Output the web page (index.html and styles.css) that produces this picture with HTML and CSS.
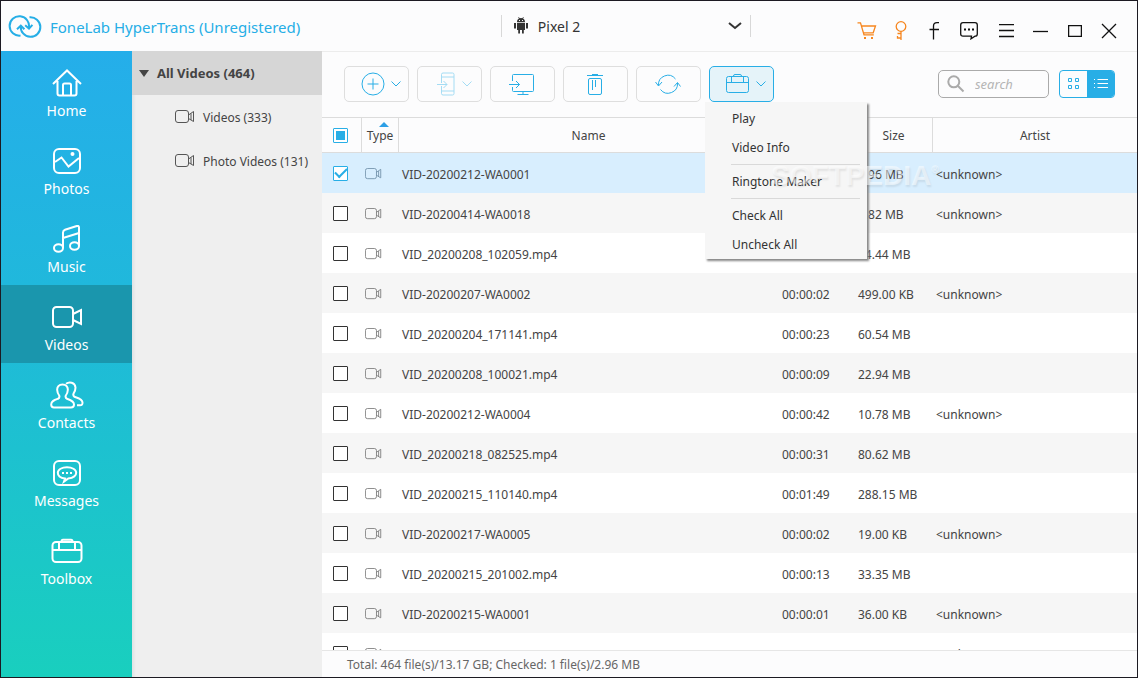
FILE: index.html
```
<!DOCTYPE html>
<html lang="en">
<head>
  <meta charset="UTF-8" />
  <meta name="viewport" content="width=device-width, initial-scale=1" />
  <title>FoneLab HyperTrans (Unregistered)</title>
  <link rel="stylesheet" href="styles.css">
</head>
<body>

  <!-- Shared icons -->
  <svg class="sprite" aria-hidden="true">
    <symbol id="icon-camera" viewBox="0 0 20 14">
      <rect x="0.5" y="0.5" width="13" height="12" rx="2.5" />
      <path d="M13.5 5L18.5 1.5V11.5L13.5 8.5M16 3.5V10" />
    </symbol>
    <symbol id="icon-chevron" viewBox="0 0 10 6">
      <path d="M0.5 0.5L5 5L9.5 0.5" />
    </symbol>
  </svg>

  <div class="window">
    <header class="titlebar">
      <div class="brand">
        <svg class="logo" width="34" height="24" viewBox="0 0 34 24">
          <path d="M12.5 20.6A9.7 9.7 0 1 1 20.8 13M17.2 10.2L21 13.6L24.4 9.8" />
          <path d="M21.5 2.3A9.8 9.8 0 1 1 12.8 11M9 14.2L12.8 10.6L16.4 14.2" />
        </svg>
        <h1>FoneLab HyperTrans (Unregistered)</h1>
      </div>

      <div class="device">
        <svg width="14" height="18" viewBox="0 0 14 18">
          <path fill="#333" d="M3 5C3 3.4 3.9 2.2 5 1.6L4.2 0.4L4.8 0.1L5.7 1.3Q7 0.9 8.3 1.3L9.2 0.1L9.8 0.4L9 1.6C10.1 2.2 11 3.4 11 5ZM3 5.7H11V13H9.8V16.5H8V13H6V16.5H4.2V13H3ZM0 6H2V11.5H0ZM12 6H14V11.5H12Z" />
          <path fill="#fff" d="M5 3H6V4H5ZM8 3H9V4H8Z" />
        </svg>
        <select aria-label="Device">
          <option selected>Pixel 2</option>
        </select>
        <svg class="device-arrow" width="14" height="8" viewBox="0 0 14 8"><path d="M1 1L7 6L13 1" /></svg>
      </div>

      <div class="actions">
        <button class="orange" aria-label="Buy">
          <svg width="20" height="18" viewBox="0 0 20 18"><path d="M0.5 0.8H3.5L7 12.8H16.8M4.7 4H18.5L16.2 10.8H6.4" /><path class="solid" d="M7 15H9V17H7ZM14 15H16V17H14Z" /></svg>
        </button>
        <button class="orange" aria-label="Register">
          <svg width="12" height="20" viewBox="0 0 12 20"><circle cx="6" cy="5.5" r="4.8" /><path d="M6 10.3V19M6 12.5H2.5M6 17H2.5V15" /></svg>
        </button>
        <button aria-label="Facebook">
          <svg width="12" height="18" viewBox="0 0 12 18"><path d="M4.5 17.5V4Q4.5 0.7 8 0.7H10M0.5 7.5H10" /></svg>
        </button>
        <button aria-label="Feedback">
          <svg width="18" height="18" viewBox="0 0 18 18"><path d="M11.5 14.2H3Q0.7 14.2 0.7 12V3Q0.7 0.7 3 0.7H15Q17.3 0.7 17.3 3V12Q17.3 14.2 15 14.2L11 16.8Z" /><path class="solid" d="M4 6.5H6V8.5H4ZM8 6.5H10V8.5H8ZM12 6.5H14V8.5H12Z" /></svg>
        </button>
        <button class="menu-button" aria-label="Menu">
          <svg width="16" height="14" viewBox="0 0 16 14"><path d="M0 0.5H15M0 6.5H15M0 12.5H15" /></svg>
        </button>
        <button aria-label="Minimize">
          <svg width="16" height="14" viewBox="0 0 16 14"><path d="M0 7.5H15" /></svg>
        </button>
        <button aria-label="Maximize">
          <svg width="14" height="12" viewBox="0 0 14 12"><path d="M0.6 0.6H13.4V11.4H0.6Z" /></svg>
        </button>
        <button aria-label="Close">
          <svg width="16" height="16" viewBox="0 0 16 16"><path d="M1 1L15 15M15 1L1 15" /></svg>
        </button>
      </div>
    </header>

    <div class="body">
      <nav class="sidebar">
        <a href="#home">
          <svg width="30" height="28" viewBox="0 0 30 28"><path d="M1 15L15 1.5L29 15M5.5 12V24.5Q5.5 26.5 7.5 26.5H22.5Q24.5 26.5 24.5 24.5V12M11 26V16Q11 14.5 12.5 14.5H17.5Q19 14.5 19 16V26" /></svg>
          Home
        </a>
        <a href="#photos">
          <svg width="30" height="28" viewBox="0 0 30 28"><rect x="2" y="2" width="26" height="24" rx="5" /><path d="M3 15L9.5 10.5L16.5 19.5L27 11" /><circle class="solid" cx="20.5" cy="7" r="2" /></svg>
          Photos
        </a>
        <a href="#music">
          <svg width="30" height="28" viewBox="0 0 30 28"><ellipse cx="6.5" cy="23" rx="4.5" ry="3.8" /><ellipse cx="22.5" cy="21" rx="4.5" ry="3.8" /><path d="M11 23V7.5Q11 5.5 13 4.8L24 1.2Q27 0.2 27 2.5V21M11 13L27 8" /></svg>
          Music
        </a>
        <a href="#videos" class="active">
          <svg width="30" height="28" viewBox="0 0 30 28"><rect x="1" y="4" width="20" height="20" rx="3.5" /><path d="M21 11L29 7V21L21 17" /></svg>
          Videos
        </a>
        <a href="#contacts">
          <svg width="34" height="28" viewBox="0 0 34 28"><path d="M12.5 3.5C8.8 3.5 7 6 7.2 9C7.3 11.5 8 13 9.2 14.5Q10 16.8 8 17.8C4.5 19 1.2 20 1.2 23.5Q1.2 26.5 4 26.5H21Q24 26.5 24 23.5C24 20 20.5 19 17 17.8Q15 16.8 15.8 14.5C17 13 17.7 11.5 17.8 9C18 6 16.2 3.5 12.5 3.5ZM16 2.8C19 0.4 25 1 25.5 6.5C25.5 9 24.8 10.5 23.8 12Q22.5 14.5 24.5 15.8C28 17 32.5 18 32.5 21.5Q32.7 24.3 30 24.3H27" /></svg>
          Contacts
        </a>
        <a href="#messages">
          <svg width="30" height="28" viewBox="0 0 30 28"><rect x="2" y="2" width="26" height="24" rx="5" /><path d="M13 19.5C8.5 19 5.8 16.8 5.8 13.8C5.8 10.5 10 8.2 15 8.2S24.2 10.5 24.2 13.8S20.5 19 16 19.6L12 22.5Z" /><path class="solid" d="M10 13H12V15H10ZM14 13H16V15H14ZM18 13H20V15H18Z" /></svg>
          Messages
        </a>
        <a href="#toolbox">
          <svg width="32" height="28" viewBox="0 0 32 28"><rect x="1.5" y="5" width="29" height="20" rx="3.5" /><path d="M2 13H30M8 5V13M24 5V13M10.5 4.5Q10.5 2.8 12 2.8H20Q21.5 2.8 21.5 4.5" /></svg>
          Toolbox
        </a>
      </nav>

      <aside class="categories">
        <h2><span class="triangle"></span>All Videos (464)</h2>
        <a href="#all"><svg class="camera"><use href="#icon-camera" /></svg>Videos (333)</a>
        <a href="#photo-videos"><svg class="camera"><use href="#icon-camera" /></svg>Photo Videos (131)</a>
      </aside>

      <main class="content">
        <div class="toolbar">
          <button class="tool" aria-label="Add">
            <svg width="24" height="24" viewBox="0 0 24 24"><circle cx="12" cy="12" r="11" /><path d="M12 6.5V17.5M6.5 12H17.5" /></svg>
            <svg class="chevron"><use href="#icon-chevron" /></svg>
          </button>
          <button class="tool" aria-label="Export to device" disabled>
            <svg width="20" height="24" viewBox="0 0 20 24"><path d="M5.5 11V2.5Q5.5 1 7 1H16.5Q18 1 18 2.5V21.5Q18 23 16.5 23H7Q5.5 23 5.5 21.5V14M5.5 5H18M5.5 19H18M1 12.5H11M7.5 9L11 12.5L7.5 16" /></svg>
            <svg class="chevron"><use href="#icon-chevron" /></svg>
          </button>
          <button class="tool" aria-label="Export to PC">
            <svg width="28" height="24" viewBox="0 0 28 24"><path d="M3.5 9V3.5Q3.5 2.5 4.5 2.5H23.5Q24.5 2.5 24.5 3.5V18.5Q24.5 19.5 23.5 19.5H4.5Q3.5 19.5 3.5 18.5V15M14 19.5V22.5M8.5 22.5H19.5M0 12.5H10.5M7 9L10.5 12.5L7 16" /></svg>
          </button>
          <button class="tool" aria-label="Delete">
            <svg width="18" height="24" viewBox="0 0 18 24"><path d="M0 3.5H16M5 2.5H11" /><rect x="1.5" y="6.5" width="13" height="16" rx="1.5" /><path d="M5.5 8V18M8.5 8V15" /></svg>
          </button>
          <button class="tool" aria-label="Refresh">
            <svg width="28" height="24" viewBox="0 0 28 24"><path d="M3.5 13.5A9.5 9.5 0 0 1 20.5 7M22.5 11A9.5 9.5 0 0 1 5.5 17.5M0.5 10L3.5 14L7 10M19 14.5L22.5 10.5L25.5 14.5" /></svg>
          </button>
          <div class="tool-menu">
            <button class="tool open" aria-label="More tools">
              <svg width="24" height="24" viewBox="0 0 24 24"><rect x="0.5" y="4.5" width="22" height="16" rx="2" /><path d="M0.5 10.5H22.5M5.5 5V10M17.5 5V10M7.5 4Q7.5 2.5 9 2.5H14Q15.5 2.5 15.5 4" /></svg>
              <svg class="chevron"><use href="#icon-chevron" /></svg>
            </button>
            <div class="dropdown">
              <button>Play</button>
              <button>Video Info</button>
              <hr>
              <button>Ringtone Maker</button>
              <hr>
              <button>Check All</button>
              <button>Uncheck All</button>
            </div>
          </div>

          <label class="search">
            <svg width="18" height="18" viewBox="0 0 18 18"><circle cx="6.8" cy="6.8" r="5.5" /><path d="M11 11L16.5 16.5" /></svg>
            <input type="search" placeholder="search" aria-label="Search">
          </label>
          <div class="views">
            <button aria-label="Grid view"><svg width="12" height="12" viewBox="0 0 12 12"><path d="M0.5 0.5H3.5V3.5H0.5ZM7.5 0.5H10.5V3.5H7.5ZM0.5 7.5H3.5V10.5H0.5ZM7.5 7.5H10.5V10.5H7.5Z" /></svg></button>
            <button class="active" aria-label="List view"><svg width="14" height="12" viewBox="0 0 14 12"><path d="M0 1.5H1M3.5 1.5H14M0 5.5H1M3.5 5.5H14M0 9.5H1M3.5 9.5H14" /></svg></button>
          </div>
        </div>

        <div class="list">
          <table>
            <colgroup>
              <col class="col-check">
              <col class="col-type">
              <col class="col-name">
              <col class="col-duration">
              <col class="col-size">
              <col class="col-artist">
            </colgroup>
            <thead>
              <tr>
                <th><input type="checkbox" class="partial" aria-label="Select all"></th>
                <th class="sorted">Type</th>
                <th>Name</th>
                <th>Duration</th>
                <th>Size</th>
                <th>Artist</th>
              </tr>
            </thead>
            <tbody id="fileRows"></tbody>
          </table>
        </div>

        <footer class="status">Total: 464 file(s)/13.17 GB; Checked: 1 file(s)/2.96 MB</footer>
        <div class="watermark">SOFTPEDIA<sup>®</sup></div>
      </main>
    </div>
  </div>

  <script>
    // name, duration, size, artist
    const files = [
      ['VID-20200212-WA0001', '00:00:15', '2.96 MB', '<unknown>'],
      ['VID-20200414-WA0018', '00:00:30', '3.82 MB', '<unknown>'],
      ['VID_20200208_102059.mp4', '00:00:12', '24.44 MB', ''],
      ['VID-20200207-WA0002', '00:00:02', '499.00 KB', '<unknown>'],
      ['VID_20200204_171141.mp4', '00:00:23', '60.54 MB', ''],
      ['VID_20200208_100021.mp4', '00:00:09', '22.94 MB', ''],
      ['VID-20200212-WA0004', '00:00:42', '10.78 MB', '<unknown>'],
      ['VID_20200218_082525.mp4', '00:00:31', '80.62 MB', ''],
      ['VID_20200215_110140.mp4', '00:01:49', '288.15 MB', ''],
      ['VID-20200217-WA0005', '00:00:02', '19.00 KB', '<unknown>'],
      ['VID_20200215_201002.mp4', '00:00:13', '33.35 MB', ''],
      ['VID-20200215-WA0001', '00:00:01', '36.00 KB', '<unknown>'],
      ['', '', '', '<unknown>']
    ];

    const fileRows = document.getElementById('fileRows');

    files.forEach((file, index) => {
      const row = document.createElement('tr');
      row.innerHTML = `
        <td><input type="checkbox" aria-label="Select file"></td>
        <td><svg class="camera small"><use href="#icon-camera" /></svg></td>
      `;
      file.forEach(text => {
        row.insertCell().textContent = text;
      });
      if (index === 0) {
        row.classList.add('selected');
        row.querySelector('input').checked = true;
      }
      fileRows.appendChild(row);
    });
  </script>
</body>
</html>
```
FILE: styles.css
```
* {
  box-sizing: border-box;
}
body {
  margin: 0;
  font-family: "Noto Sans", "Open Sans", sans-serif;
  font-size: 12px;
  color: #444;
}
button, input, select {
  font-family: inherit;
  color: inherit;
}
button {
  background: none;
  border: none;
  padding: 0;
  cursor: pointer;
}
a {
  color: inherit;
  text-decoration: none;
}
svg {
  fill: none;
  stroke: currentColor;
  flex-shrink: 0;
}
.sprite {
  display: none;
}
.window {
  height: 100vh;
  display: flex;
  flex-direction: column;
  border: 1px solid #1c1a22;
  background: #fcfcfd;
  overflow: hidden;
}

/* Title bar */
.titlebar {
  height: 50px;
  flex-shrink: 0;
  display: grid;
  grid-template-columns: 44% 22% 1fr;
  align-items: center;
}
.brand {
  display: flex;
  align-items: center;
  gap: 8px;
  padding: 2px 0 0 7px;
  color: #26aee6;
}
.logo {
  stroke-width: 2;
}
.brand h1 {
  margin: 0;
  font-size: 15px;
  font-weight: normal;
  white-space: nowrap;
}
.device {
  height: 22px;
  display: flex;
  align-items: center;
  padding: 0 8px 0 12px;
  border-left: 1px solid #d8d8d8;
  border-right: 1px solid #d8d8d8;
}
.device svg {
  stroke: none;
}
.device select {
  flex: 1;
  appearance: none;
  border: none;
  background: none;
  padding: 0 0 0 10px;
  font-size: 14px;
  color: #333;
}
.device .device-arrow {
  stroke: #333;
  stroke-width: 2;
}
.actions {
  display: flex;
  justify-content: flex-end;
  padding: 10px 11px 0 0;
  color: #111;
}
.actions button {
  width: 34px;
  height: 24px;
  display: flex;
  align-items: center;
  justify-content: center;
}
.actions svg {
  stroke-width: 1.3;
}
.actions .orange {
  color: #f6861f;
}
.actions .menu-button {
  margin-left: 4px;
}
svg .solid {
  fill: currentColor;
  stroke: none;
}

/* Left navigation */
.body {
  flex: 1;
  min-height: 0;
  display: flex;
}
.sidebar {
  width: 131px;
  flex-shrink: 0;
  background: linear-gradient(#25aeea, #1fbad9 45%, #19cfbe);
  color: #fff;
}
.sidebar a {
  height: 78px;
  display: flex;
  flex-direction: column;
  align-items: center;
  gap: 4px;
  padding-top: 18px;
  font-size: 14px;
  line-height: 20px;
}
.sidebar svg {
  stroke-width: 2;
}
.sidebar .active {
  background: #1a96ad;
}
.categories {
  width: 190px;
  flex-shrink: 0;
  background: linear-gradient(to right, #dfe2e4, #efefef 4px);
}
.categories h2 {
  height: 44px;
  margin: 0;
  display: flex;
  align-items: center;
  gap: 8px;
  padding-left: 7px;
  background: #d6d6d6;
  font-size: 13px;
  font-weight: bold;
}
.triangle {
  border: 5px solid transparent;
  border-top: 7px solid #444;
  border-bottom: none;
}
.categories a {
  height: 44px;
  display: flex;
  align-items: center;
  gap: 8px;
  padding-left: 43px;
}
.camera {
  width: 20px;
  height: 14px;
  color: #555;
}
.camera.small {
  display: block;
  width: 17px;
  height: 12px;
  color: #777;
}

/* Toolbar */
.content {
  position: relative;
  flex: 1;
  min-width: 0;
  display: flex;
  flex-direction: column;
  border-top: 1px solid #ececec;
}
.toolbar {
  height: 65px;
  flex-shrink: 0;
  display: flex;
  align-items: center;
  gap: 8px;
  padding: 0 22px 1px;
}
.tool {
  width: 65px;
  height: 36px;
  display: flex;
  align-items: center;
  justify-content: center;
  gap: 6px;
  border: 1px solid #dedede;
  border-radius: 5px;
  color: #28aee6;
}
.tool:has(.chevron) {
  padding-left: 8px;
}
.tool:disabled {
  color: #a4dcf4;
}
.tool.open {
  background: #e5f3f9;
  border-color: #28aee6;
}
.chevron {
  width: 10px;
  height: 6px;
}
.tool-menu {
  position: relative;
}
.dropdown {
  position: absolute;
  z-index: 2;
  top: 36px;
  left: -4px;
  width: 162px;
  padding: 2px 7px 0 0;
  background: #f6f6f6;
  box-shadow: 2px 2px 2px #888;
}
.dropdown button {
  display: block;
  width: 100%;
  height: 29px;
  padding-left: 27px;
  font-size: 12px;
  text-align: left;
  color: #333;
}
.dropdown hr {
  margin: 2px 0 2px 26px;
  border: none;
  border-top: 1px solid #d9d9d9;
}
.search {
  width: 111px;
  height: 28px;
  margin-left: auto;
  display: flex;
  align-items: center;
  gap: 10px;
  padding: 0 8px;
  border: 1px solid #aaa;
  border-radius: 5px;
  color: #aaa;
}
.search svg {
  stroke-width: 2;
}
.search input {
  width: 100%;
  min-width: 0;
  border: none;
  outline: none;
  background: none;
  padding: 0;
  font-size: 13px;
  font-style: italic;
}
.search input::placeholder {
  color: #b5b5b5;
}
.views {
  height: 28px;
  display: flex;
  margin-left: 2px;
  border: 1px solid #28aee6;
  border-radius: 4px;
  overflow: hidden;
  color: #28aee6;
}
.views button {
  width: 27px;
  display: flex;
  align-items: center;
  justify-content: center;
}
.views .active {
  background: #28aee6;
  color: #fff;
}

/* File list */
.list {
  flex: 1;
  min-height: 0;
  overflow: hidden;
  background: #fff;
}
table {
  width: 100%;
  table-layout: fixed;
  border-collapse: separate;
  border-spacing: 0;
}
.col-check { width: 40px; }
.col-type { width: 37px; }
.col-duration { width: 76px; }
.col-size { width: 78px; }
.col-artist { width: 204px; }
th {
  height: 36px;
  padding: 0;
  background: #fcfcfd;
  border: 1px solid #dcdcdc;
  border-width: 1px 1px 1px 0;
  font-weight: normal;
}
th:last-child {
  border-right: none;
}
.sorted {
  position: relative;
}
.sorted::before {
  content: "";
  position: absolute;
  top: 4px;
  left: 17px;
  border: 5px solid transparent;
  border-top: none;
  border-bottom-color: #2d9fe6;
}
td {
  height: 40px;
  padding: 2px 3px 0;
  white-space: nowrap;
}
td:first-child, th:first-child {
  padding: 0 0 0 11px;
  text-align: left;
}
td:nth-child(2) {
  padding: 1px 0 0 3px;
}
tbody tr:nth-child(even) {
  background: #f6f6f6;
}
tbody .selected {
  background: #d8eefe;
}
.selected .camera {
  color: #6f8fa8;
}
input[type="checkbox"] {
  appearance: none;
  width: 15px;
  height: 15px;
  margin: 0;
  display: grid;
  place-items: center;
  border: 1px solid #333;
  border-radius: 1px;
  background: #fff;
}
input[type="checkbox"]:checked, input.partial {
  border-color: #28aee6;
}
input.partial::after {
  content: "";
  width: 9px;
  height: 9px;
  background: #28aee6;
}
input[type="checkbox"]:checked::after {
  content: "";
  width: 10px;
  height: 5px;
  margin-bottom: 3px;
  border-left: 2px solid #28aee6;
  border-bottom: 2px solid #28aee6;
  transform: rotate(-45deg);
}
.status {
  height: 27px;
  flex-shrink: 0;
  padding-left: 25px;
  border-top: 1px solid #e6e6e6;
  line-height: 27px;
  color: #666;
}
.watermark {
  position: absolute;
  z-index: 3;
  top: 107px;
  left: 449px;
  font-family: "Liberation Sans", sans-serif;
  font-size: 28px;
  line-height: 34px;
  font-weight: bold;
  color: rgba(255, 255, 255, 0.5);
  text-shadow: 1px 2px 2px rgba(0, 0, 0, 0.08);
  pointer-events: none;
}
.watermark sup {
  font-size: 10px;
  line-height: 10px;
  vertical-align: 12px;
}
```
